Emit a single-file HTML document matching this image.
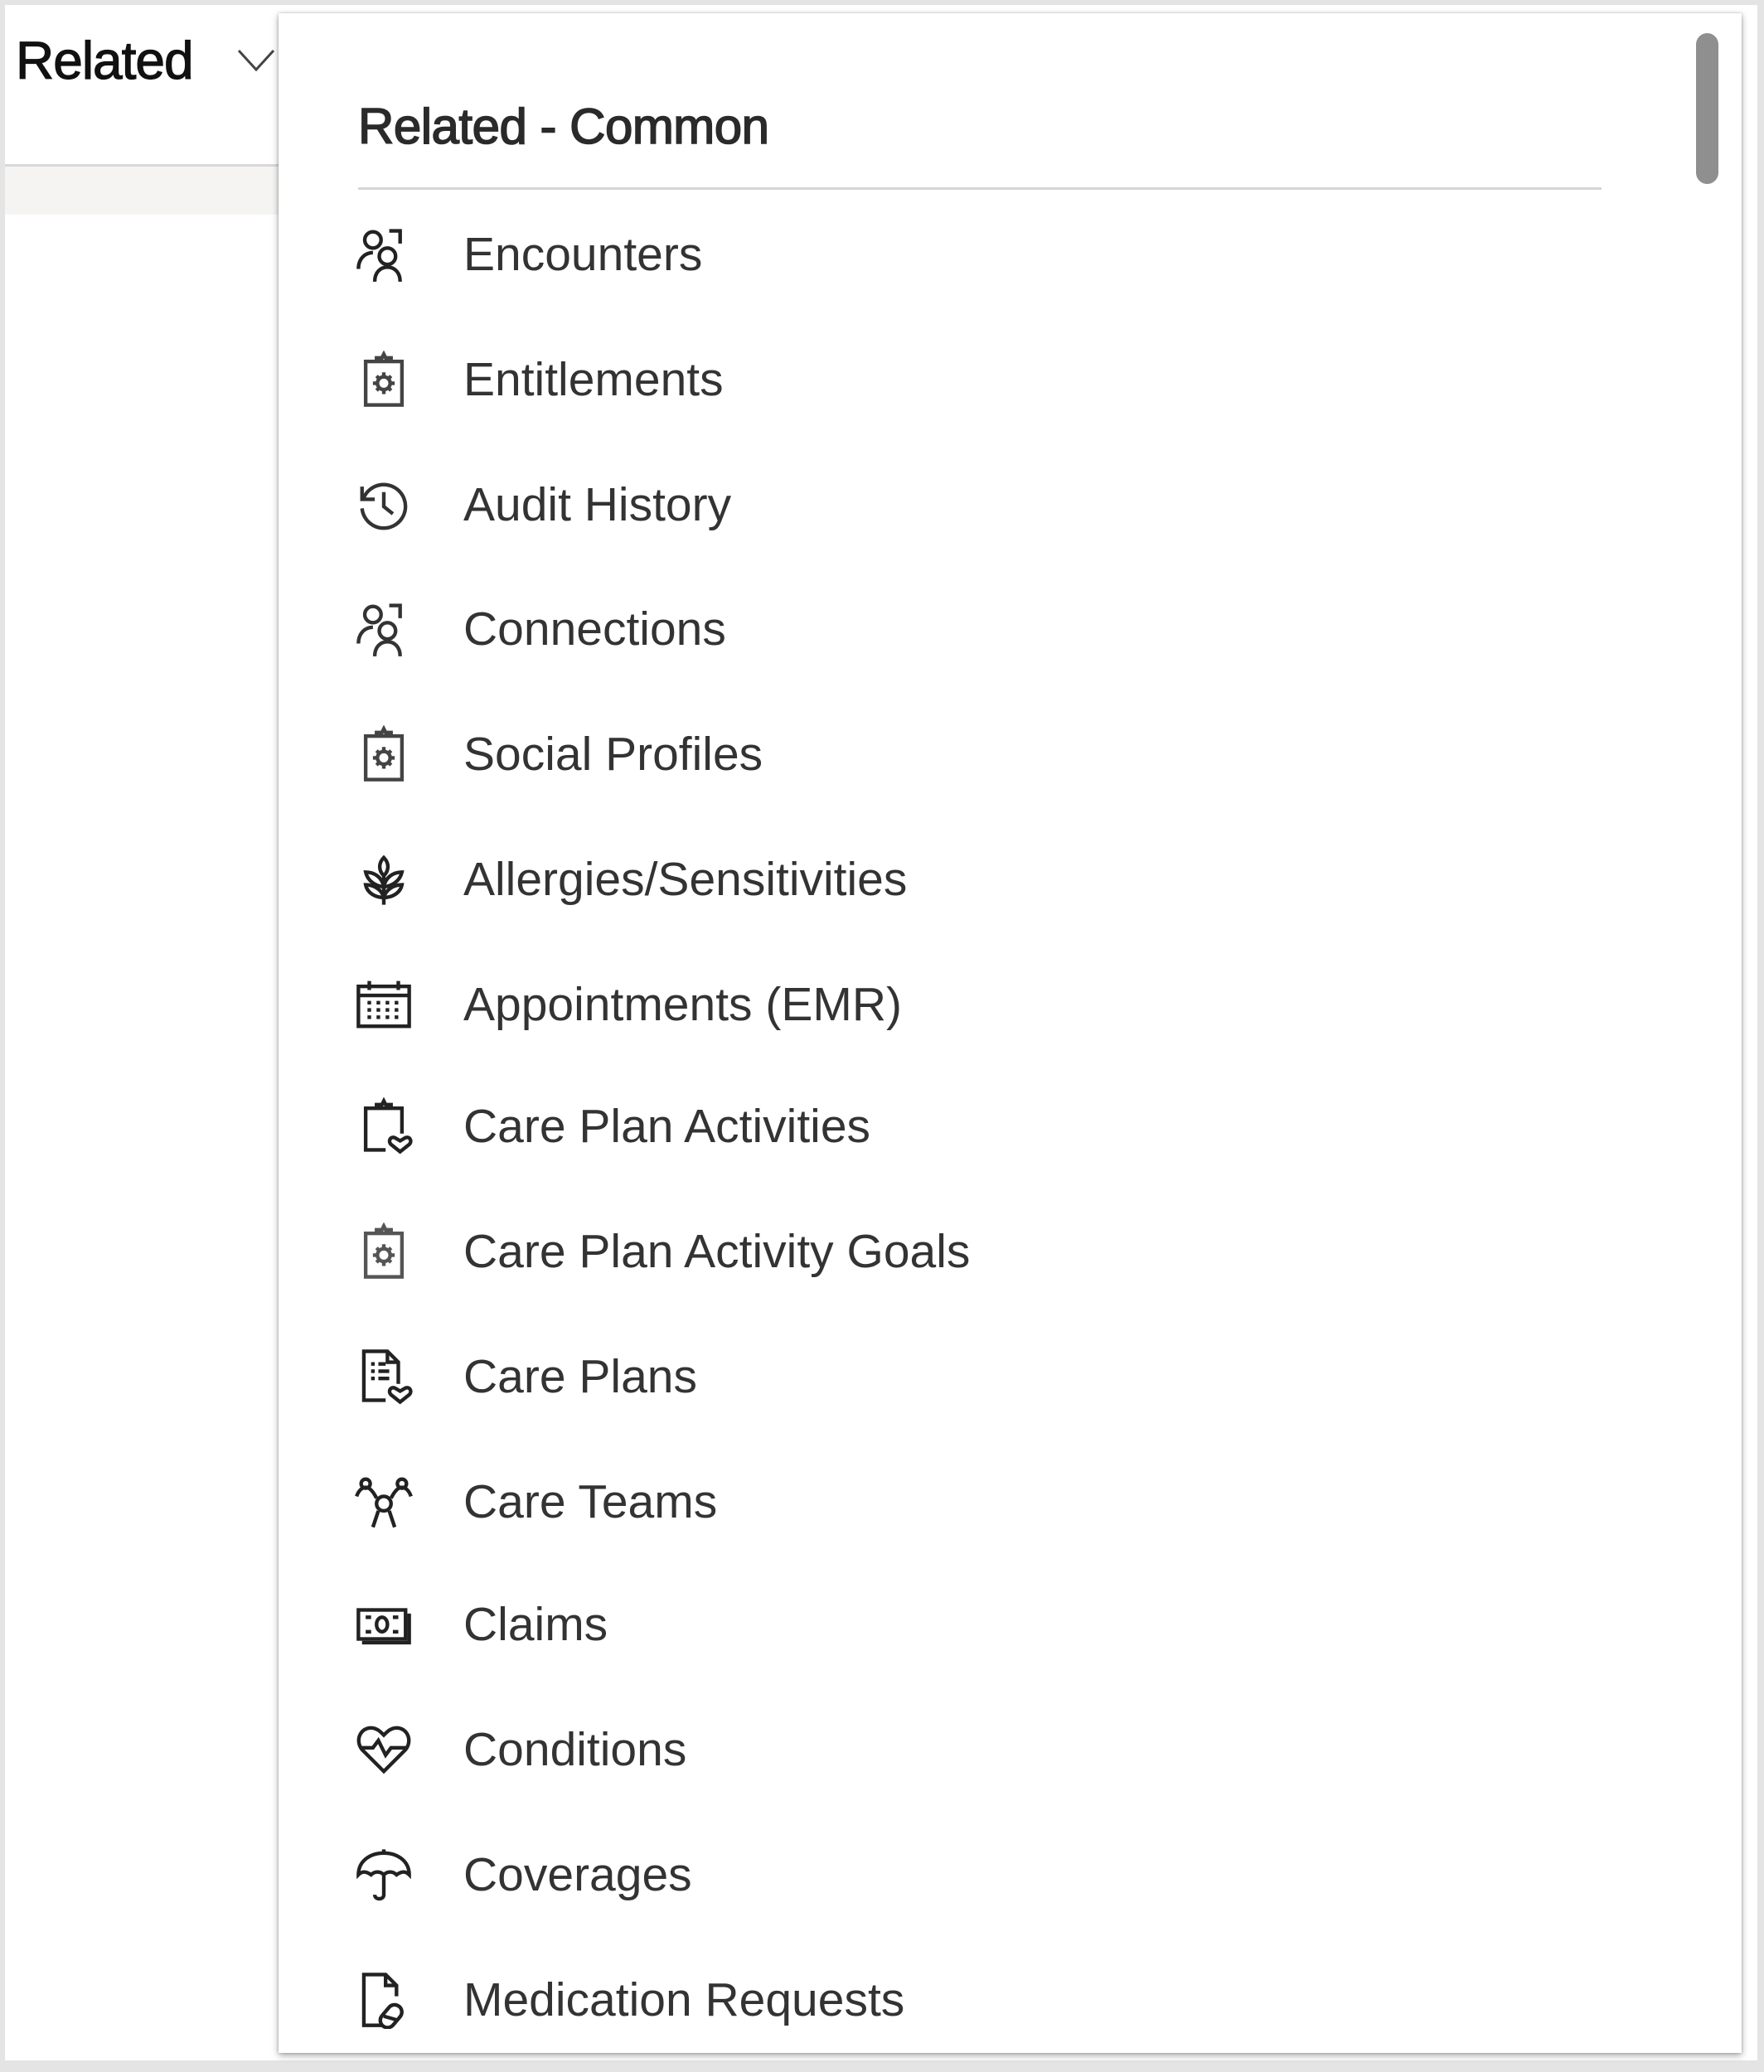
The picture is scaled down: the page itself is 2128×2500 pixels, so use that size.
<!DOCTYPE html>
<html><head><meta charset="utf-8"><style>
html,body{margin:0;padding:0}
body{width:2128px;height:2500px;position:relative;overflow:hidden;background:#fff;font-family:"Liberation Sans",sans-serif}
.frame{position:absolute;left:0;top:0;width:2128px;height:2500px;box-sizing:border-box;border:6px solid #e4e4e4;border-bottom-width:14px;border-right-width:8px}
.hdr{position:absolute;left:19px;top:36px;font-size:64px;color:#111;letter-spacing:-1px;-webkit-text-stroke:1.2px #111}
.chev{position:absolute;left:286px;top:58px}
.hline{position:absolute;left:6px;top:198px;width:340px;height:3px;background:#d8d8d8}
.band{position:absolute;left:6px;top:201px;width:340px;height:58px;background:#f5f4f3}
.panel{position:absolute;left:336px;top:16px;width:1765px;height:2461px;background:#fff;box-shadow:0 3px 8px rgba(0,0,0,.35),0 0 3px rgba(0,0,0,.2)}
.title{position:absolute;left:432px;top:118px;font-size:60px;color:#2a2a2a;letter-spacing:-0.5px;-webkit-text-stroke:1.6px #2a2a2a}
.div{position:absolute;left:432px;top:226px;width:1500px;height:3px;background:#d6d6d6}
.sb{position:absolute;left:2046px;top:40px;width:27px;height:182px;border-radius:14px;background:#8f8f8f}
.it{position:absolute;left:430px;height:80px;line-height:80px;font-size:57px;color:#333}
.it svg{position:absolute;left:-2px;top:5px;width:70px;height:70px}
.it span{position:absolute;left:129px;top:0;white-space:nowrap}
</style></head><body>
<div class="frame"></div>
<div class="hdr">Related</div>
<svg class="chev" width="46" height="30" viewBox="0 0 46 30"><path d="M2 3 L23 26 L44 3" fill="none" stroke="#444" stroke-width="3"/></svg>
<div class="hline"></div><div class="band"></div>
<div class="panel"></div>
<div class="title">Related - Common</div>
<div class="div"></div>
<div class="sb"></div>

<div class="it" style="top:267px"><svg viewBox="0 0 32 32" fill="none" stroke="#222" stroke-width="2"><circle cx="10" cy="8" r="4.5"/><path d="M2 24c0-6 4-9 8-9"/><circle cx="18" cy="17" r="4.5"/><path d="M11 31c0-5 3-8 7-8s7 3 7 8"/><path d="M19 3h6v7"/></svg><span>Encounters</span></div>

<div class="it" style="top:418px"><svg viewBox="0 0 32 32" fill="none" stroke="#444" stroke-width="2"><rect x="6" y="6" width="20" height="24"/><path d="M12 6v-2h3l1-2 1 2h3v2"/><circle cx="16" cy="18" r="3.5"/><path d="M16 12v2M16 22v2M10 18h2M20 18h2M12 14l1.5 1.5M20 14l-1.5 1.5M12 22l1.5-1.5M20 22l-1.5-1.5"/></svg><span>Entitlements</span></div>

<div class="it" style="top:569px"><svg viewBox="0 0 32 32" fill="none" stroke="#333" stroke-width="2"><path d="M5 12A12 12 0 1 1 4 18"/><path d="M4 6v7h7"/><path d="M16 9v8l5 4"/></svg><span>Audit History</span></div>

<div class="it" style="top:719px"><svg viewBox="0 0 32 32" fill="none" stroke="#333" stroke-width="2"><circle cx="10" cy="8" r="4.5"/><path d="M2 24c0-6 4-9 8-9"/><circle cx="18" cy="17" r="4.5"/><path d="M11 31c0-5 3-8 7-8s7 3 7 8"/><path d="M19 3h6v7"/></svg><span>Connections</span></div>

<div class="it" style="top:870px"><svg viewBox="0 0 32 32" fill="none" stroke="#444" stroke-width="2"><rect x="6" y="6" width="20" height="24"/><path d="M12 6v-2h3l1-2 1 2h3v2"/><circle cx="16" cy="18" r="3.5"/><path d="M16 12v2M16 22v2M10 18h2M20 18h2M12 14l1.5 1.5M20 14l-1.5 1.5M12 22l1.5-1.5M20 22l-1.5-1.5"/></svg><span>Social Profiles</span></div>

<div class="it" style="top:1021px"><svg viewBox="0 0 32 32" fill="none" stroke="#222" stroke-width="2"><path d="M16 4c3 3 3 7 0 10c-3-3-3-7 0-10z"/><path d="M16 30V14"/><path d="M16 20c-4 0-9-3-10-8c5 0 9 3 10 8zM16 20c4 0 9-3 10-8c-5 0-9 3-10 8z"/><path d="M16 26c-4 0-9-2-10-7c5 0 9 3 10 7zM16 26c4 0 9-2 10-7c-5 0-9 3-10 7z"/></svg><span>Allergies/Sensitivities</span></div>

<div class="it" style="top:1172px"><svg viewBox="0 0 32 32" fill="none" stroke="#222" stroke-width="2"><rect x="2" y="6" width="28" height="22"/><path d="M2 11h28M8 3v5M24 3v5"/><path d="M7 15h2M12 15h2M17 15h2M22 15h2M7 19h2M12 19h2M17 19h2M22 19h2M7 23h2M12 23h2M17 23h2M22 23h2"/></svg><span>Appointments (EMR)</span></div>

<div class="it" style="top:1319px"><svg viewBox="0 0 32 32" fill="none" stroke="#222" stroke-width="2"><path d="M17 29H6V6h20v14"/><path d="M12 6V4h3l1-2 1 2h3v2"/><path d="M25 30l-5-4c-2-2 0-5 2.5-3.5L25 24l2.5-1.5c2.5-1.5 4.5 1.5 2.5 3.5z"/></svg><span>Care Plan Activities</span></div>

<div class="it" style="top:1470px"><svg viewBox="0 0 32 32" fill="none" stroke="#555" stroke-width="2"><rect x="6" y="6" width="20" height="24"/><path d="M12 6v-2h3l1-2 1 2h3v2"/><circle cx="16" cy="18" r="3.5"/><path d="M16 12v2M16 22v2M10 18h2M20 18h2M12 14l1.5 1.5M20 14l-1.5 1.5M12 22l1.5-1.5M20 22l-1.5-1.5"/></svg><span>Care Plan Activity Goals</span></div>

<div class="it" style="top:1621px"><svg viewBox="0 0 32 32" fill="none" stroke="#222" stroke-width="2"><path d="M17 29H5V2h13l6 6v12"/><path d="M18 2v6h6"/><path d="M9 9h2M13 9h4M9 13h2M13 13h6M9 17h2M13 17h6"/><path d="M25 30l-5-4c-2-2 0-5 2.5-3.5L25 24l2.5-1.5c2.5-1.5 4.5 1.5 2.5 3.5z"/></svg><span>Care Plans</span></div>

<div class="it" style="top:1772px"><svg viewBox="0 0 32 32" fill="none" stroke="#222" stroke-width="2"><circle cx="16" cy="17" r="4"/><path d="M10 30l3-9M22 30l-3-9"/><circle cx="6" cy="6" r="2.5"/><circle cx="26" cy="6" r="2.5"/><path d="M1 13c1-3 3-5 5-5s4 2 6 6M31 13c-1-3-3-5-5-5s-4 2-6 6"/></svg><span>Care Teams</span></div>

<div class="it" style="top:1920px"><svg viewBox="0 0 32 32" fill="none" stroke="#222" stroke-width="2"><rect x="2" y="8" width="26" height="16"/><path d="M4 26h26V10"/><ellipse cx="15" cy="16" rx="3" ry="4"/><path d="M6 12h3M6 20h3M21 12h3M21 20h3"/></svg><span>Claims</span></div>

<div class="it" style="top:2071px"><svg viewBox="0 0 32 32" fill="none" stroke="#222" stroke-width="2"><path d="M16 28L4 16C0 11 3 4 9 4c3 0 5 2 7 4c2-2 4-4 7-4c6 0 9 7 5 12z"/><path d="M3 15h7l3-4 4 8 3-4h9"/></svg><span>Conditions</span></div>

<div class="it" style="top:2222px"><svg viewBox="0 0 32 32" fill="none" stroke="#222" stroke-width="2"><path d="M2 16C2 8 9 4 16 4s14 4 14 12c-2-2-4-2-7 0c-2-2-5-2-7 0c-2-2-5-2-7 0c-3-2-5-2-7 0z"/><path d="M16 4V2M16 16v11c0 3-5 3-5 0"/></svg><span>Coverages</span></div>

<div class="it" style="top:2373px"><svg viewBox="0 0 32 32" fill="none" stroke="#222" stroke-width="2"><path d="M15 30H5V2h12l6 6v6"/><path d="M17 2v6h6"/><rect x="16" y="18" width="8" height="14" rx="4" transform="rotate(40 20 25)"/><path d="M16 25l7 2"/></svg><span>Medication Requests</span></div>
</body></html>
